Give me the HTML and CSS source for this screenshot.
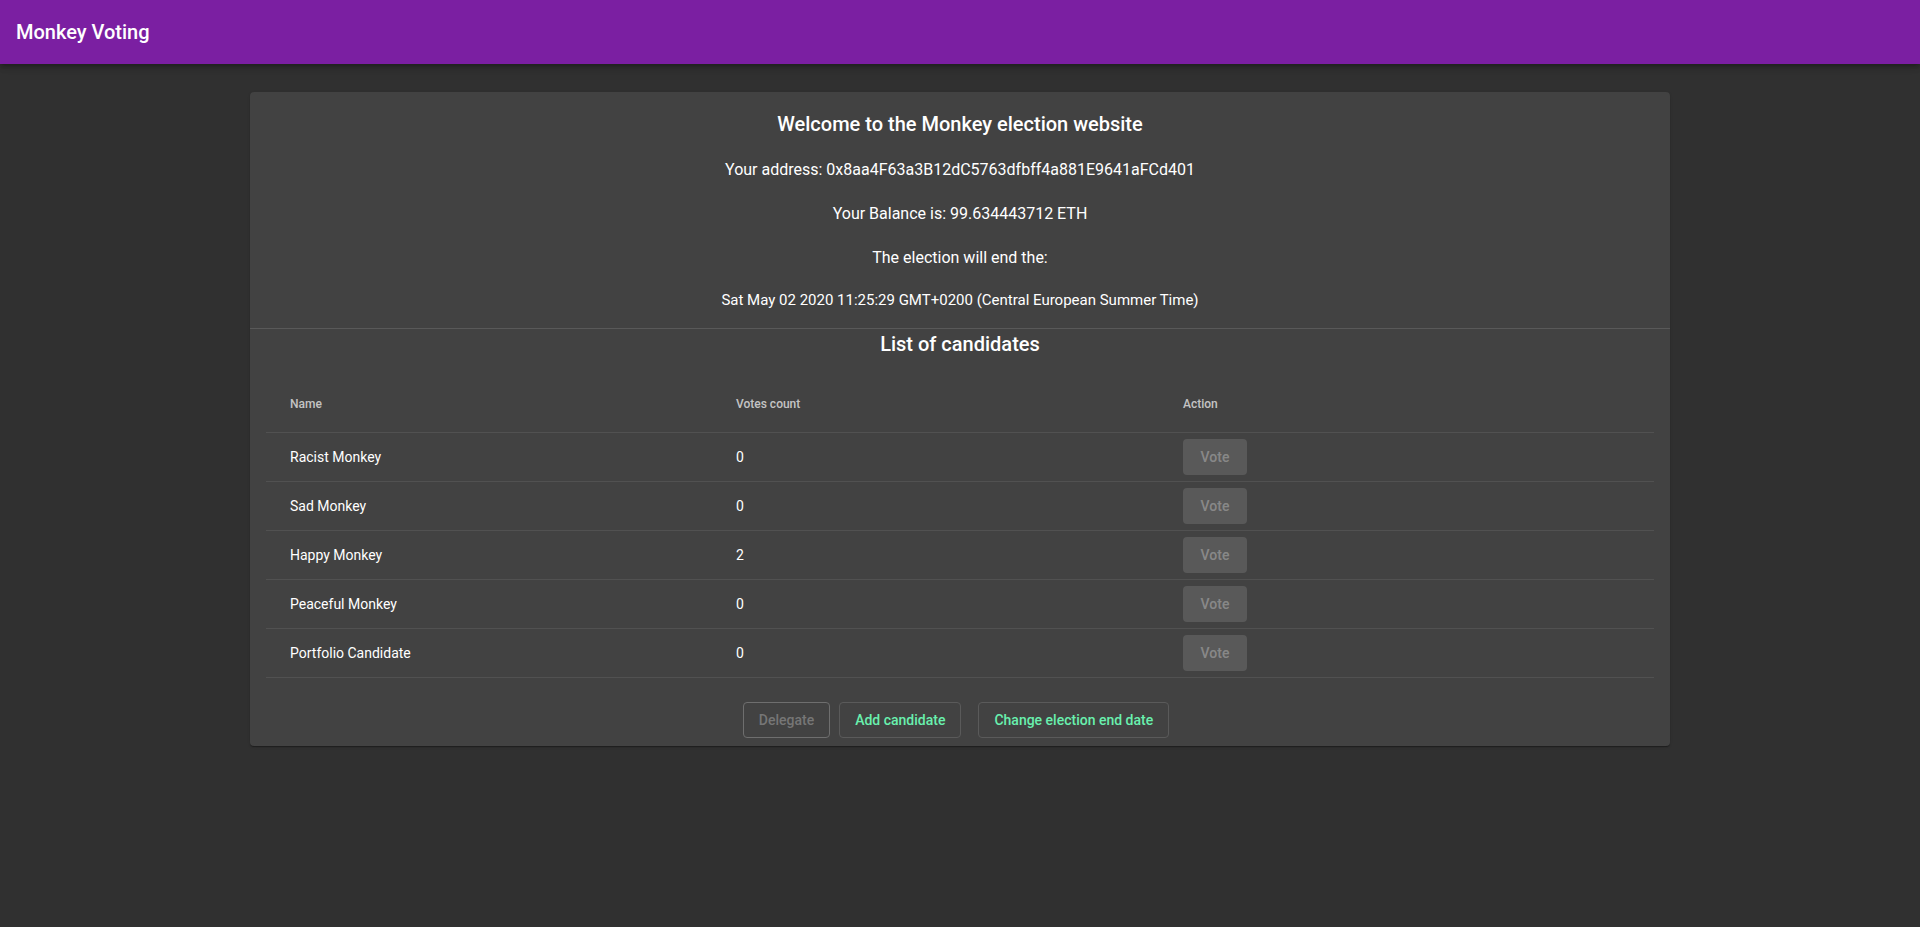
FILE: index.html
```html
<!DOCTYPE html>
<html lang="en">
<head>
<meta charset="utf-8">
<title>Monkey Voting</title>
<link rel="stylesheet" href="styles.css">
</head>
<body>
<header class="appbar">
  <h1 class="appbar-title">Monkey Voting</h1>
</header>
<main class="main">
  <section class="card">
    <div class="card-top">
      <h2 class="heading">Welcome to the Monkey election website</h2>
      <p class="line">Your address: 0x8aa4F63a3B12dC5763dfbff4a881E9641aFCd401</p>
      <p class="line">Your Balance is: 99.634443712 ETH</p>
      <p class="line">The election will end the:</p>
      <p class="line small">Sat May 02 2020 11:25:29 GMT+0200 (Central European Summer Time)</p>
    </div>
    <hr class="divider">
    <h2 class="heading list-title">List of candidates</h2>
    <div class="table-wrap">
      <table class="table">
        <colgroup>
          <col class="col-name">
          <col class="col-votes">
          <col class="col-action">
        </colgroup>
        <thead>
          <tr class="head-row">
            <th>Name</th>
            <th>Votes count</th>
            <th>Action</th>
          </tr>
        </thead>
        <tbody>
          <tr class="row"><td>Racist Monkey</td><td>0</td><td><button class="vote-btn" disabled>Vote</button></td></tr>
          <tr class="row"><td>Sad Monkey</td><td>0</td><td><button class="vote-btn" disabled>Vote</button></td></tr>
          <tr class="row"><td>Happy Monkey</td><td>2</td><td><button class="vote-btn" disabled>Vote</button></td></tr>
          <tr class="row"><td>Peaceful Monkey</td><td>0</td><td><button class="vote-btn" disabled>Vote</button></td></tr>
          <tr class="row"><td>Portfolio Candidate</td><td>0</td><td><button class="vote-btn" disabled>Vote</button></td></tr>
        </tbody>
      </table>
    </div>
    <div class="actions">
      <button class="outline-btn disabled-btn">Delegate</button>
      <button class="outline-btn green-btn add-btn">Add candidate</button>
      <button class="outline-btn green-btn date-btn">Change election end date</button>
    </div>
  </section>
</main>
</body>
</html>
```

FILE: styles.css
```css
* {
  box-sizing: border-box;
}

html, body {
  margin: 0;
  padding: 0;
}

body {
  background: #303030;
  color: #ffffff;
  font-family: Roboto, "Liberation Sans", Arial, sans-serif;
  min-height: 927px;
}

.appbar {
  height: 64px;
  background: #7b1fa2;
  display: flex;
  align-items: center;
  padding: 0 16px;
  box-shadow: 0px 2px 4px -1px rgba(0,0,0,0.2), 0px 4px 5px 0px rgba(0,0,0,0.14), 0px 1px 10px 0px rgba(0,0,0,0.12);
  position: relative;
  z-index: 2;
}

.appbar-title {
  margin: 0;
  font-size: 20px;
  font-weight: 500;
  line-height: 32px;
  color: #ffffff;
}

.main {
  padding: 28px 250px 0;
}

.card {
  background: #424242;
  border-radius: 4px;
  box-shadow: 0px 2px 1px -1px rgba(0,0,0,0.2), 0px 1px 1px 0px rgba(0,0,0,0.14), 0px 1px 3px 0px rgba(0,0,0,0.12);
  padding: 0 0 8px;
}

.card-top {
  padding-top: 16px;
  text-align: center;
}

.heading {
  margin: 0;
  font-size: 20px;
  font-weight: 500;
  line-height: 32px;
  text-align: center;
}

.line {
  margin: 16px 0;
  font-size: 16px;
  line-height: 28px;
}

.line.small {
  font-size: 15px;
  line-height: 24px;
}

.divider {
  margin: 0;
  border: none;
  height: 1px;
  background: rgba(255,255,255,0.12);
}

.list-title {
  line-height: 30px;
}

.table-wrap {
  padding: 17px 16px 0;
}

.table {
  width: 100%;
  border-collapse: collapse;
  table-layout: fixed;
}

.col-name { width: 446px; }
.col-votes { width: 447px; }
.col-action { width: auto; }

.head-row th {
  height: 56px;
  padding: 0 24px;
  text-align: left;
  font-size: 12px;
  font-weight: 500;
  color: rgba(255,255,255,0.7);
  border-bottom: 1px solid #515151;
  vertical-align: middle;
}

.row td {
  height: 49px;
  padding: 0 24px;
  font-size: 14px;
  font-weight: 400;
  color: #ffffff;
  border-bottom: 1px solid #515151;
  vertical-align: middle;
}

.vote-btn {
  display: block;
  min-width: 64px;
  height: 36px;
  padding: 6px 16px;
  border: none;
  border-radius: 4px;
  background: rgba(255,255,255,0.12);
  color: rgba(255,255,255,0.3);
  font-family: inherit;
  font-size: 14px;
  font-weight: 500;
}

.actions {
  display: flex;
  justify-content: center;
  padding-top: 24px;
}

.outline-btn {
  height: 36px;
  padding: 5px 15px;
  border-radius: 4px;
  background: transparent;
  font-family: inherit;
  font-size: 14px;
  font-weight: 500;
  line-height: 24px;
}

.disabled-btn {
  border: 1px solid #6e6e6e;
  color: #767676;
  margin-right: 9px;
}

.green-btn {
  border: 1px solid #5a5a5a;
  color: #69f0ae;
}

.add-btn {
  margin-right: 17px;
}

.date-btn {
  margin-right: 8px;
}
```
